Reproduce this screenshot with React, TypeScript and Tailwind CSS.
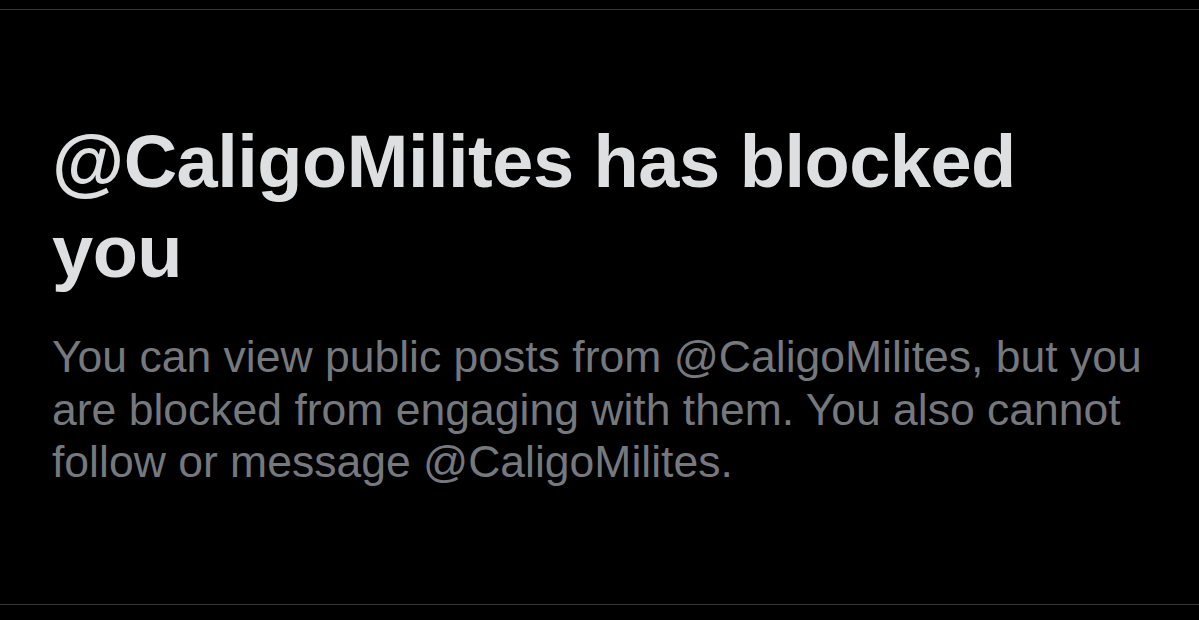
const handle = '@CaligoMilites';

const BlockedNotice = () => {
  return (
    <section className="h-[596px] border-y border-[#333639] px-[52px] pt-[107px]">
      <h1 className="text-[74px] leading-[90px] font-bold tracking-[-0.5px] text-[#dedfe0] font-['Liberation_Sans',Arial,sans-serif]">
        {handle} has blocked you
      </h1>
      <p className="mt-[34px] text-[44.5px] leading-[52.5px] text-[#75797e] font-['Liberation_Sans',Arial,sans-serif]">
        You can view public posts from {handle}, but you are blocked from engaging with them. You also
        cannot follow or message {handle}.
      </p>
    </section>
  );
};

export default function App() {
  return (
    <div className="h-[620px] w-full overflow-hidden bg-black pt-[9px]">
      <BlockedNotice />
    </div>
  );
}
